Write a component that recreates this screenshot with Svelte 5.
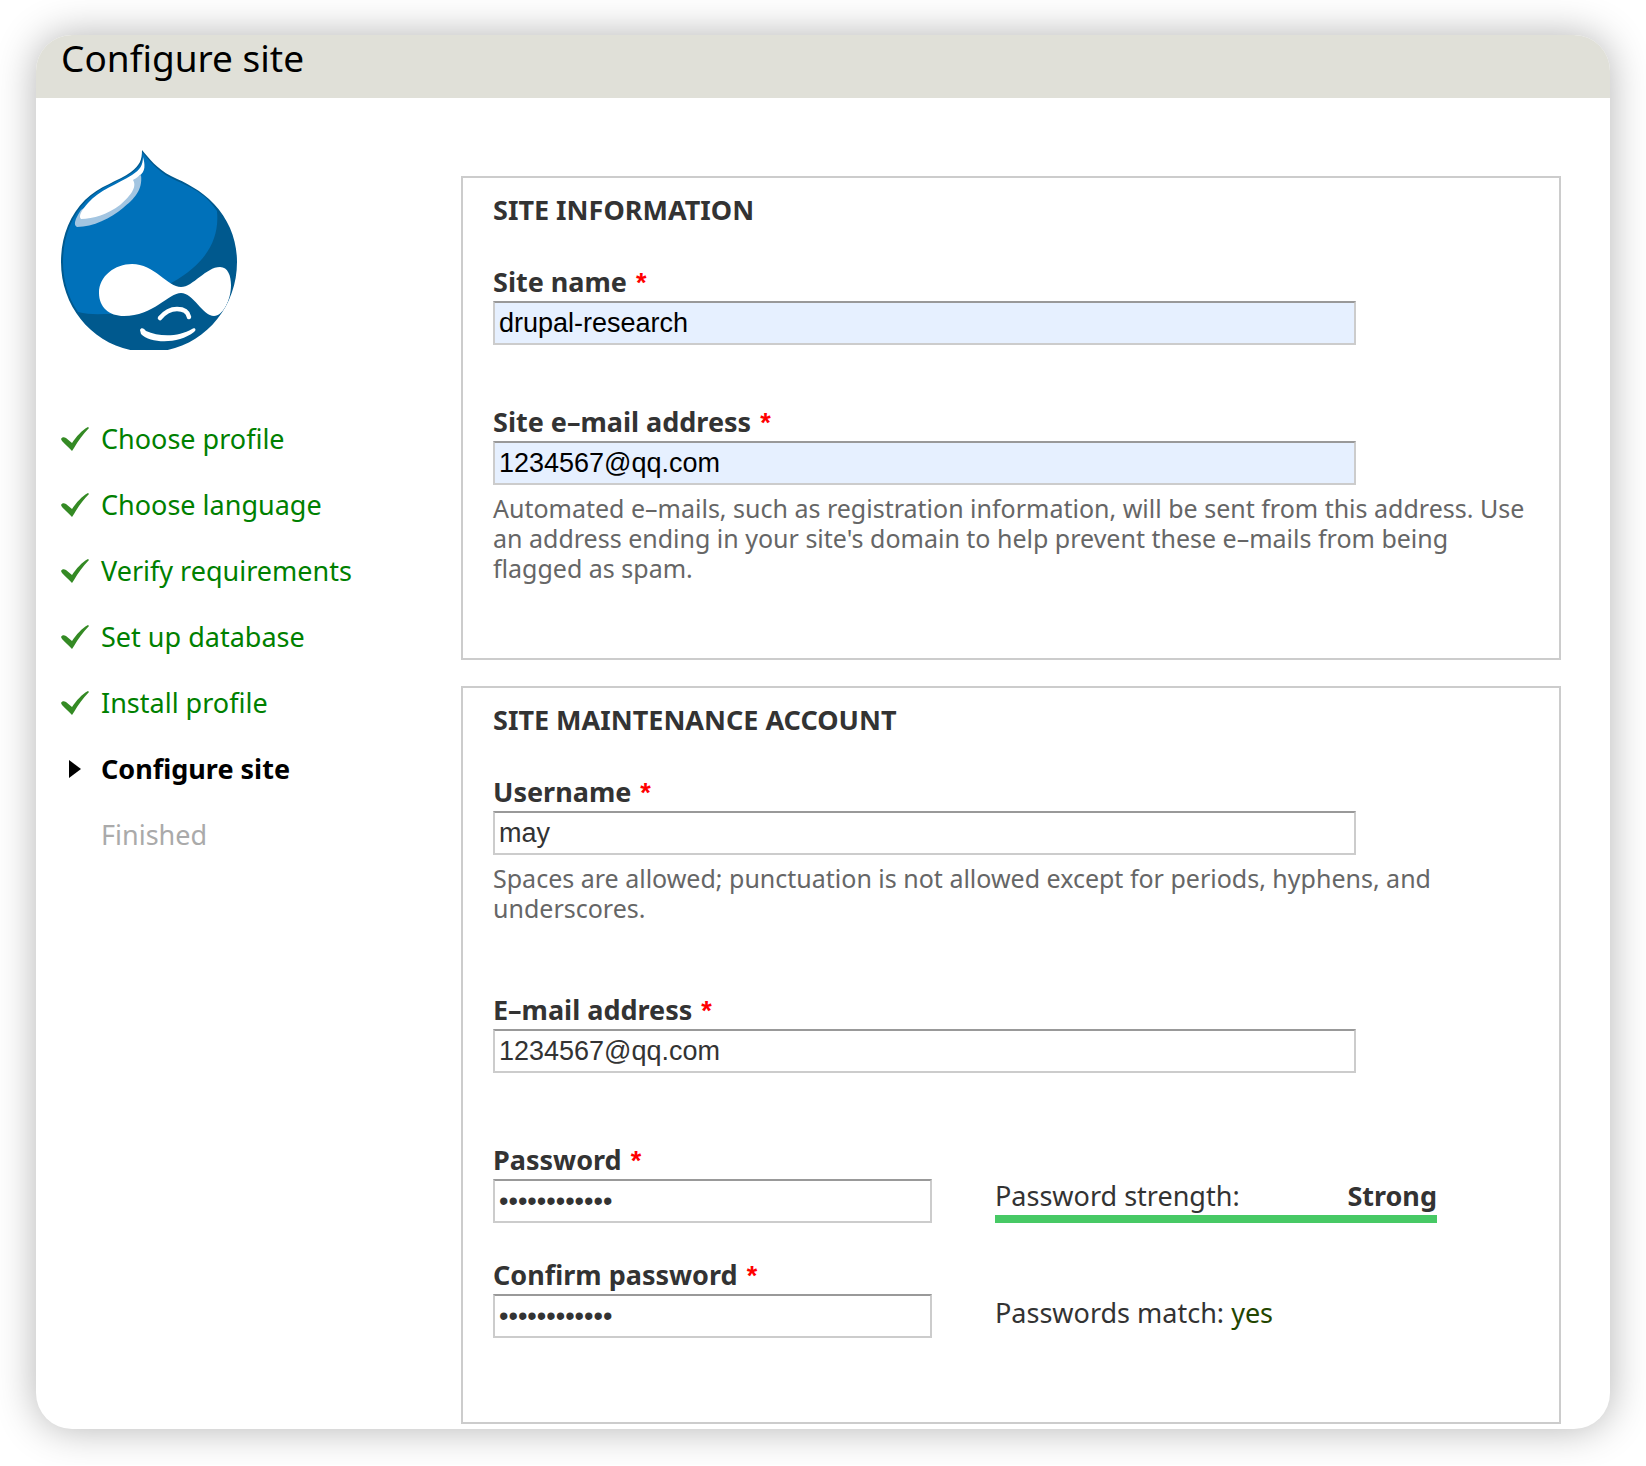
<script>
  const tasks = [
    { label: 'Choose profile', state: 'done' },
    { label: 'Choose language', state: 'done' },
    { label: 'Verify requirements', state: 'done' },
    { label: 'Set up database', state: 'done' },
    { label: 'Install profile', state: 'done' },
    { label: 'Configure site', state: 'active' },
    { label: 'Finished', state: 'todo' }
  ];

  let siteName = $state('drupal-research');
  let siteMail = $state('1234567@qq.com');
  let username = $state('may');
  let mail = $state('1234567@qq.com');
  let password = $state('abcDEF123!@#');
  let confirmation = $state('abcDEF123!@#');
  let matches = $derived(password === confirmation);
</script>

{#snippet req()}<span class="required" title="This field is required.">*</span>{/snippet}

<div class="page">
  <header><h1>Configure site</h1></header>

  <div class="columns">
    <aside>
      <svg class="logo" viewBox="0 0 176 200" role="img" aria-label="Drupal">
        <defs>
          <clipPath id="drop">
            <path d="M81 0C88 8 96 19 110 26C125 33 140 40 153 54C168 70 176 90 176 112C176 162 137 202 88 202C39 202 0 162 0 112C0 88 8 66 24 50C38 36 58 31 70 22C79 15 81 10 81 0Z" />
          </clipPath>
        </defs>
        <g clip-path="url(#drop)">
          <rect width="176" height="200" fill="#00598e" />
          <path fill="#0071ba" d="M81 2C88 10 96 21 110 28C126 36 143 41 156 61C159 92 142 115 112 132L51 164C38 164 28 165 17 162C7 148 2 130 2 112C2 88 10 66 26 50C40 36 60 31 72 22C81 15 82 10 81 2Z" />
          <path fill="#a3c5e1" d="M80 25C82 40 73 49 62 58C50 68 32 77 16 77C12 75 14 69 20 60L60 34Z" />
          <path fill="#fff" d="M82 7C84 14 85 22 78 26C76 28 73 29 72 30C77 38 67 48 59 55C47 64 32 69 20 69C17 66 21 60 27 53C38 40 57 34 71 25C79 20 82 15 82 7Z" />
          <path fill="#fff" d="M71 114C93 114 107 137 120 137C132 137 145 117 159 117C167 117 170 126 170 135C170 150 162 166 153 166C142 166 132 143 120 143C108 143 92 166 63 166C48 166 38 157 38 143C38 126 54 114 71 114Z" />
          <path fill="none" stroke="#fff" stroke-width="4.5" stroke-linecap="round" d="M99 168C104 162 110 159 116 159C124 159 127 162 128 167" />
          <path fill="#fff" d="M79 180C80 177 83 178 85 181C98 187 118 187 131 179C134 177 136 180 133 182C118 194 90 194 80 184Z" />
        </g>
      </svg>

      <ol class="tasks">
        {#each tasks as task}
          <li class={task.state}>
            <svg class="mark" viewBox="0 0 28 24" aria-hidden="true">
              {#if task.state === 'done'}
                <path fill="#348a24" d="M0 12C1 10 3 10 5 11L11 16C15 10 21 3 27 0L28 1C22 7 17 14 13 21L11 24C8 21 4 17 1 14Z" />
              {:else if task.state === 'active'}
                <path d="M8 3L20 12L8 21Z" />
              {/if}
            </svg>
            <span>{task.label}</span>
          </li>
        {/each}
      </ol>
    </aside>

    <form>
      <fieldset>
        <legend>SITE INFORMATION</legend>
        <div class="field">
          <label for="site-name">Site name {@render req()}</label>
          <input class="filled" id="site-name" type="text" bind:value={siteName} />
        </div>
        <div class="field">
          <label for="site-mail">Site e–mail address {@render req()}</label>
          <input class="filled" id="site-mail" type="text" bind:value={siteMail} />
          <p>Automated e–mails, such as registration information, will be sent from this address. Use an address ending in your site's domain to help prevent these e–mails from being flagged as spam.</p>
        </div>
      </fieldset>

      <fieldset class="account">
        <legend>SITE MAINTENANCE ACCOUNT</legend>
        <div class="field">
          <label for="username">Username {@render req()}</label>
          <input id="username" type="text" bind:value={username} />
          <p>Spaces are allowed; punctuation is not allowed except for periods, hyphens, and underscores.</p>
        </div>
        <div class="field">
          <label for="mail">E–mail address {@render req()}</label>
          <input id="mail" type="text" bind:value={mail} />
        </div>
        <div class="passwords">
          <div class="secret">
            <label for="password">Password {@render req()}</label>
            <input id="password" type="password" bind:value={password} />
          </div>
          <div class="strength">
            <div class="strength-text"><span>Password strength:</span><strong>Strong</strong></div>
            <div class="bar"></div>
          </div>
          <div class="secret">
            <label for="confirm">Confirm password {@render req()}</label>
            <input id="confirm" type="password" bind:value={confirmation} />
          </div>
          <div class="match">Passwords match: <span>{matches ? 'yes' : 'no'}</span></div>
        </div>
      </fieldset>
    </form>
  </div>
</div>

<style>
  :global(body) {
    background: #fff;
  }
  .page {
    margin: 35px 36px 36px;
    border-radius: 36px;
    background: #fff;
    box-shadow: 0 0 40px rgba(0, 0, 0, 0.3);
    color: #333;
    font-family: 'Lucida Grande', 'Noto Sans', 'Open Sans', sans-serif;
    font-size: 27px;
    line-height: 34px;
  }
  header {
    padding: 0 25px 17px;
    border-radius: 36px 36px 0 0;
    background: #e0e0d8;
  }
  h1 {
    margin: 0;
    color: #000;
    font-size: 37px;
    font-weight: 400;
    line-height: 46px;
  }
  .columns {
    display: grid;
    grid-template-columns: 400px minmax(0, 1fr);
    padding: 0 49px 5px 25px;
  }
  aside {
    padding-top: 52px;
  }
  .logo {
    display: block;
    width: 176px;
    height: 200px;
  }
  .tasks {
    display: grid;
    gap: 32px;
    margin: 72px 0 0;
    padding: 0;
    list-style: none;
  }
  .tasks li {
    display: flex;
    align-items: center;
    gap: 12px;
  }
  .mark {
    width: 28px;
    height: 24px;
  }
  .done {
    color: #008000;
  }
  .active {
    color: #000;
    font-weight: 700;
  }
  .todo {
    color: #aaa;
  }
  form {
    display: grid;
    gap: 26px;
    padding-top: 78px;
  }
  fieldset {
    min-width: 0;
    margin: 0;
    padding: 15px 30px 75px;
    border: 2px solid #ccc;
  }
  .account {
    padding-bottom: 84px;
  }
  legend {
    float: left;
    width: 100%;
    margin-bottom: 40px;
    padding: 0;
    font-weight: 700;
  }
  .field {
    clear: both;
  }
  .field + .field {
    margin-top: 62px;
  }
  .account .field + .field,
  .passwords {
    margin-top: 72px;
  }
  label {
    display: block;
    padding-bottom: 4px;
    font-weight: 700;
    line-height: 30px;
  }
  .required {
    margin-left: 2px;
    color: #f00;
    font-family: 'Liberation Sans', sans-serif;
    line-height: 1;
  }
  input {
    display: block;
    box-sizing: border-box;
    width: 100%;
    height: 44px;
    padding: 0 4px;
    border: 2px solid #ccc;
    border-top-color: #999;
    border-radius: 0;
    background: #fff;
    color: #333;
    font: 27px 'Liberation Sans', Arial, sans-serif;
  }
  .field input {
    width: 83.3%;
  }
  .filled {
    background: #e6f0ff;
    color: #000;
  }
  p {
    margin: 8px 0 0;
    color: #666;
    font-size: 25px;
    line-height: 30px;
  }
  .passwords {
    display: grid;
    grid-template-columns: 439px 442px;
    gap: 37px 63px;
    align-items: end;
  }
  .strength-text {
    display: flex;
    justify-content: space-between;
  }
  .bar {
    height: 8px;
    margin-top: 2px;
    background: #47c965;
  }
  .match {
    padding-bottom: 8px;
  }
  .match span {
    color: #234600;
  }
</style>
